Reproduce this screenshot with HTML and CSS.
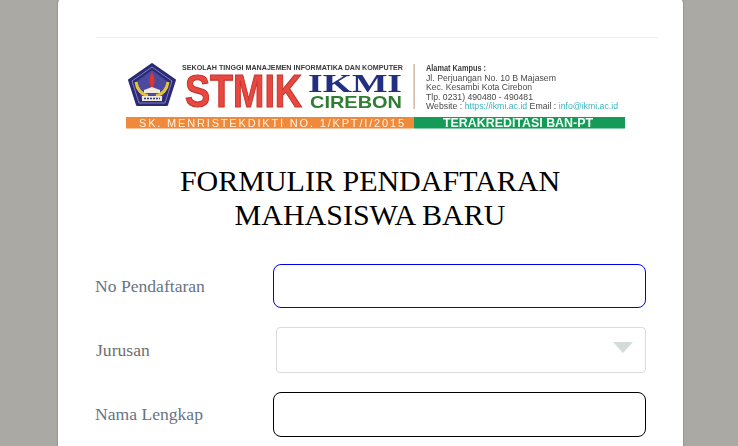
FILE: index.html
```html
<!DOCTYPE html>
<html lang="id">
<head>
    <meta charset="UTF-8">
    <meta name="viewport" content="width=device-width, initial-scale=1.0">
    <title>Formulir Pendaftaran Mahasiswa Baru</title>
    <link rel="stylesheet" href="styles.css">
</head>
<body>
    <div class="container">
        <hr class="top-line">

        <svg class="logo" viewBox="126 60 500 70" width="500" height="70" role="img" aria-label="STMIK IKMI Cirebon">
            <!-- lambang -->
            <path d="M152 64 L175 80 L167 105 L137 105 L129 80 Z" fill="#2a2a78" stroke="#2a2a78" stroke-width="2" stroke-linejoin="round"/>
            <path d="M152 67 L172 81 L165 103 L139 103 L132 81 Z" fill="none" stroke="#9a93c4" stroke-width="0.8"/>
            <path d="M152 70 L168 82 L162 100 L142 100 L136 82 Z" fill="#4a4aa0"/>
            <path d="M152 72 C148 79 149 84 152 89 C155 84 156 79 152 72 Z" fill="#e0342c"/>
            <path d="M136 82 C137 90 141 94 148 96 M168 82 C167 90 163 94 156 96" fill="none" stroke="#e6c636" stroke-width="3"/>
            <path d="M144 90 L152 87 L160 90 L160 93 L144 93 Z" fill="#efeadb"/>
            <rect x="142" y="96" width="20" height="5" fill="#efeadb"/>
            <path d="M144 98.5 H160" stroke="#3a3a80" stroke-width="1.4" stroke-dasharray="2 1"/>

            <text x="182" y="70" class="logo-top" textLength="221" lengthAdjust="spacingAndGlyphs">SEKOLAH TINGGI MANAJEMEN INFORMATIKA DAN KOMPUTER</text>
            <text x="185" y="107" class="logo-stmik" textLength="117" lengthAdjust="spacingAndGlyphs">STMIK</text>
            <text x="308" y="92" class="logo-ikmi" textLength="94" lengthAdjust="spacingAndGlyphs">IKMI</text>
            <text x="310" y="108" class="logo-cirebon" textLength="92" lengthAdjust="spacingAndGlyphs">CIREBON</text>

            <rect x="413.5" y="64" width="1.2" height="45" fill="#c9a58c"/>

            <text x="426" y="71" class="addr addr-head" textLength="60" lengthAdjust="spacingAndGlyphs">Alamat Kampus :</text>
            <text x="426" y="81" class="addr" textLength="130" lengthAdjust="spacingAndGlyphs">Jl. Perjuangan No. 10 B Majasem</text>
            <text x="426" y="90" class="addr" textLength="106" lengthAdjust="spacingAndGlyphs">Kec. Kesambi Kota Cirebon</text>
            <text x="426" y="100" class="addr" textLength="107" lengthAdjust="spacingAndGlyphs">Tlp. 0231) 490480 - 490481</text>
            <text x="426" y="109" class="addr" textLength="192" lengthAdjust="spacingAndGlyphs">Website : <tspan class="addr-link">https://ikmi.ac.id</tspan> Email : <tspan class="addr-link">info@ikmi.ac.id</tspan></text>

            <rect x="126" y="117" width="288" height="11.5" fill="#ef8a3c"/>
            <rect x="414" y="117" width="211" height="11.5" fill="#159a58"/>
            <text x="139" y="126.7" class="bar-left" textLength="265">SK. MENRISTEKDIKTI NO. 1/KPT/I/2015</text>
            <text x="443" y="126.7" class="bar-right" textLength="150" lengthAdjust="spacingAndGlyphs">TERAKREDITASI BAN-PT</text>
        </svg>

        <h1>FORMULIR PENDAFTARAN<br>MAHASISWA BARU</h1>

        <form class="form">
            <div class="form-row">
                <label for="noDaftar">No Pendaftaran</label>
                <input type="text" id="noDaftar" class="field field-focus">
            </div>
            <div class="form-row">
                <label for="jurusan" class="label-muted">Jurusan</label>
                <div class="select-box" id="jurusan"><span class="select-arrow"></span></div>
            </div>
            <div class="form-row">
                <label for="nama">Nama Lengkap</label>
                <input type="text" id="nama" class="field">
            </div>
        </form>
    </div>
</body>
</html>
```

FILE: styles.css
```css
* {
    margin: 0;
    padding: 0;
    box-sizing: border-box;
}

html, body {
    height: 100%;
    overflow: hidden;
}

body {
    background-color: #aba9a3;
    font-family: "Liberation Serif", "Times New Roman", serif;
    padding-left: 58px;
}

.container {
    background: #ffffff;
    width: 625px;
    height: 520px;
    border-radius: 8px 8px 0 0;
    margin-top: -4px;
    padding: 41px 25px 0 37px;
    box-shadow: 0 0 2px rgba(0, 0, 0, 0.35);
}

.top-line {
    border: none;
    border-top: 1px solid #eef0f0;
    margin-left: 1px;
}

.logo {
    display: block;
    margin: 22px 0 0 31px;
    filter: blur(0.4px);
}

.logo-top {
    font: bold 7.5px "Liberation Sans", sans-serif;
    fill: #3a3a3a;
}

.logo-stmik {
    font: bold 47px "Liberation Sans", sans-serif;
    fill: #e8483f;
    stroke: #c5362f;
    stroke-width: 1.2px;
}

.logo-ikmi {
    font: bold 25px "Liberation Serif", serif;
    fill: #23307f;
}

.logo-cirebon {
    font: bold 17px "Liberation Sans", sans-serif;
    fill: #2f7d32;
}

.addr {
    font: 9px "Liberation Sans", sans-serif;
    fill: #4a4a4a;
}

.addr-head {
    font-weight: bold;
    fill: #3a3a3a;
}

.addr-link {
    fill: #3fb4bd;
}

.bar-left {
    font: 11px "Liberation Sans", sans-serif;
    fill: #fff3e6;
}

.bar-right {
    font: bold 12px "Liberation Sans", sans-serif;
    fill: #f2fff6;
}

h1 {
    font-size: 30px;
    font-weight: 400;
    line-height: 34px;
    color: #000000;
    text-align: center;
    margin: 34px 0 0 -13px;
}

.form {
    margin-top: 32px;
}

.form-row {
    display: flex;
    align-items: center;
    margin-bottom: 19px;
}

label {
    width: 178px;
    font-size: 17.6px;
    color: #667486;
}

.label-muted {
    color: #6f6f6f;
    padding-left: 1px;
}

.field {
    width: 373px;
    height: 45px;
    border: 1px solid #000000;
    border-radius: 8px;
    background: #ffffff;
    outline: none;
}

.field-focus {
    height: 44px;
    border-color: #0000ee;
}

.select-box {
    width: 370px;
    height: 46px;
    margin-left: 3px;
    border: 1px solid #d9dcdc;
    border-radius: 4px;
    background: #ffffff;
    position: relative;
}

.select-arrow {
    position: absolute;
    top: 14px;
    right: 12px;
    border-left: 10px solid transparent;
    border-right: 10px solid transparent;
    border-top: 11px solid #d5dbd9;
}
```
